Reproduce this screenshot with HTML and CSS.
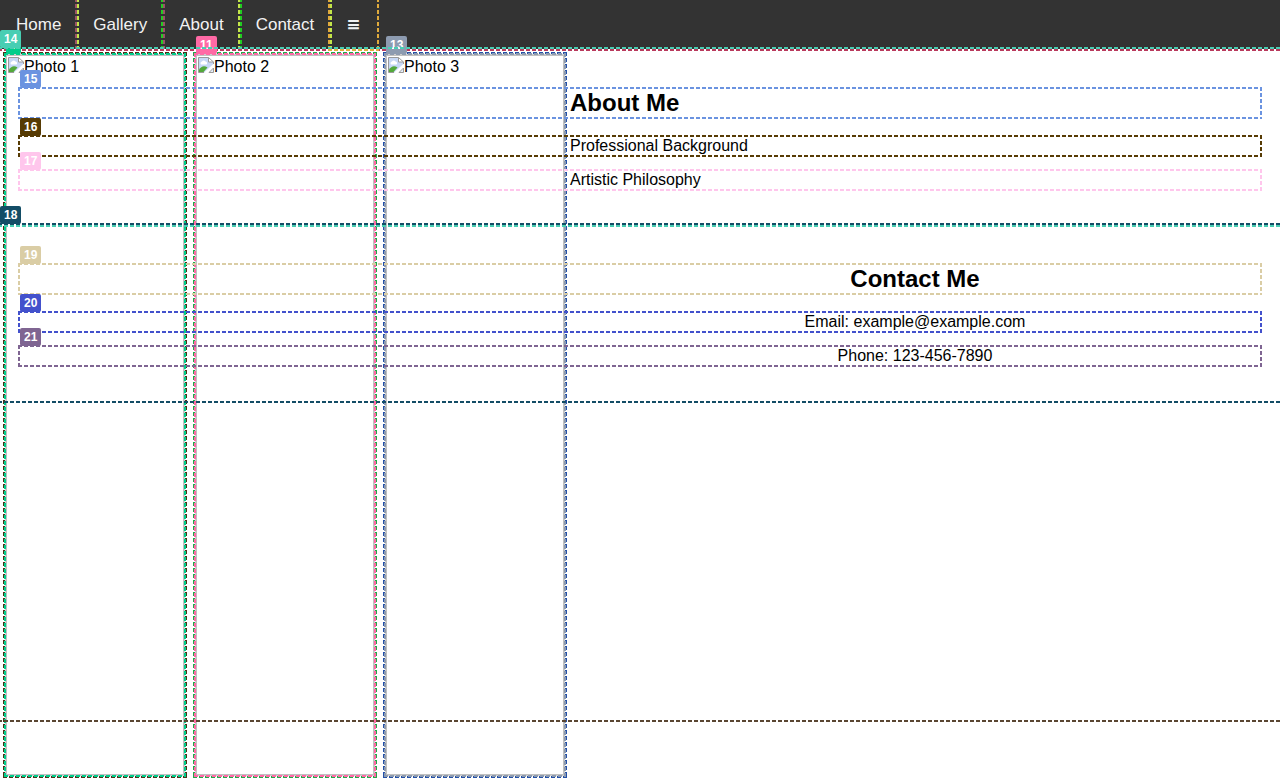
FILE: index.html
```html
<!DOCTYPE html>
<html lang="en">
<head>
<meta charset="utf-8">
<title>Photo Portfolio</title>
<link rel="stylesheet" href="styles.css">
</head>
<body>
<svg class="sprite" aria-hidden="true">
  <symbol id="broken" viewBox="0 0 16 16">
    <path d="M.5 .5h10l5 5V7L7 15.500H.5z" fill="#c6d7f5"/>
    <path d="M3 7.500a2 2 0 0 1 1-3 2 2 0 0 1 3.500 0 1.700 1.700 0 0 1 1 3z" fill="#fff"/>
    <path d="M1 15v-2.500c2-3 5-4.500 8.500-2L5.500 15z" fill="#52a83a"/>
    <path d="M10.500 .5v4.500H15" fill="#fff"/>
    <path d="M6 15.500H.5V.5h10L15.500 5v2M10.500 .5V5h5" fill="none" stroke="#9a9a9a"/>
    <path d="M6 15.500L15.500 7v2.500L9 15.500z" fill="#fff"/>
    <path d="M15.500 11v4.500H11z" fill="#e4edfb" stroke="#9a9a9a"/>
  </symbol>
</svg>
<div class="page">
  <div class="screen outlined mark-umber">
    <nav class="nav outlined mark-red">
      <ul class="nav-list">
        <li><a class="nav-link outlined mark-lime" href="#home">Home</a></li>
        <li><a class="nav-link outlined mark-mauve" href="#gallery">Gallery</a></li>
        <li><a class="nav-link outlined mark-green" href="#about">About</a></li>
        <li><a class="nav-link outlined mark-lime" href="#contact">Contact</a></li>
      </ul>
      <a class="nav-link nav-toggle outlined mark-amber" href="#menu">≡</a>
    </nav>
    <div class="gallery" id="gallery">
      <div class="photo outlined mark-bark">
        <div class="picture outlined mark-mint"><span class="tag">9</span><svg class="broken" aria-hidden="true"><use href="#broken"/></svg>Photo 1</div>
      </div>
      <div class="photo outlined mark-leaf">
        <div class="picture outlined mark-pink"><span class="tag">11</span><svg class="broken" aria-hidden="true"><use href="#broken"/></svg>Photo 2</div>
      </div>
      <div class="photo outlined mark-blue">
        <div class="picture outlined mark-slate"><span class="tag">13</span><svg class="broken" aria-hidden="true"><use href="#broken"/></svg>Photo 3</div>
      </div>
    </div>
    <section class="section outlined mark-teal" id="about">
      <span class="tag">14</span>
      <h2 class="outlined mark-sky"><span class="tag">15</span>About Me</h2>
      <p class="outlined mark-brown"><span class="tag">16</span>Professional Background</p>
      <p class="outlined mark-blush"><span class="tag">17</span>Artistic Philosophy</p>
    </section>
    <section class="section contact outlined mark-navy" id="contact">
      <span class="tag">18</span>
      <h2 class="outlined mark-sand"><span class="tag">19</span>Contact Me</h2>
      <p class="outlined mark-indigo"><span class="tag">20</span>Email: example@example.com</p>
      <p class="outlined mark-plum"><span class="tag">21</span>Phone: 123-456-7890</p>
    </section>
  </div>
</div>
</body>
</html>
```

FILE: styles.css
```css
:root {
  --screen: 720px;
}

* {
  box-sizing: border-box;
}

body {
  margin: 0;
  font: 16px/18px "Liberation Sans", Arial, sans-serif;
  color: #000;
  background: #fff;
}

.sprite {
  display: none;
}

.page {
  min-height: 100vh;
  overflow-x: clip;
}

.screen {
  height: var(--screen);
}

/* Dashed frame drawn just outside a box */
.outlined {
  position: relative;
}

.outlined::after {
  content: "";
  position: absolute;
  inset: -2px;
  pointer-events: none;
  --across: linear-gradient(90deg, var(--mark) 4px, transparent 4px);
  --down: linear-gradient(var(--mark) 4px, transparent 4px);
  background:
    var(--across) 0 0 / 6px 2px repeat-x,
    var(--across) 0 100% / 6px 2px repeat-x,
    var(--down) 0 0 / 2px 6px repeat-y,
    var(--down) 100% 0 / 2px 6px repeat-y;
}

/* Navigation */
.nav {
  display: flex;
  z-index: 0;
  background: #333;
}

.nav-list {
  display: flex;
  margin: 0 -2px 0 0;
  padding: 0 2px 0 0;
  list-style: none;
  overflow: hidden;
}

.nav-link {
  display: block;
  padding: 14px 16px;
  font-size: 17px;
  line-height: 21px;
  color: #f2f2f2;
  text-decoration: none;
}

.nav-toggle {
  font-family: "DejaVu Sans", sans-serif;
  font-weight: bold;
  z-index: 1;
}

/* Gallery */
.photo {
  float: left;
  z-index: 0;
  width: 180px;
  margin: 5px;
  border: 1px solid #ccc;
}

.picture {
  z-index: 1;
  height: var(--screen);
  padding: 1px;
  border: 1px solid silver;
  line-height: 20px;
}

.photo.outlined::after,
.picture.outlined::after {
  inset: -3px;
}

.broken {
  width: 16px;
  height: 16px;
  vertical-align: top;
}

/* Text sections */
.section {
  padding: 20px;
}

.section::before {
  content: "";
  display: table;
}

.section h2 {
  margin: 20px 0;
  font-size: 24px;
  line-height: 28px;
}

.section p {
  margin: 16px 0;
}

.contact {
  text-align: center;
}

/* Numbered labels above each outlined box */
.tag {
  position: absolute;
  top: -19px;
  left: 0;
  padding: 0 4px;
  border-radius: 2px;
  font-size: 12px;
  font-weight: bold;
  line-height: 18px;
  color: #fff;
  background: var(--mark);
}

.picture .tag {
  top: -20px;
  left: -1px;
}

.mark-umber { --mark: #5a4632; }
.mark-red { --mark: #b93a5c; }
.mark-lime { --mark: #c3e64a; }
.mark-mauve { --mark: #9b5268; }
.mark-green { --mark: #22cc22; }
.mark-amber { --mark: #e0ab3c; }
.mark-bark { --mark: #4b3418; }
.mark-mint { --mark: #00cd8b; }
.mark-leaf { --mark: #22a84a; }
.mark-pink { --mark: #ff69a5; }
.mark-blue { --mark: #2451a8; }
.mark-slate { --mark: #8d9bb0; }
.mark-teal { --mark: #48ceb3; }
.mark-sky { --mark: #6b93e0; }
.mark-brown { --mark: #573b04; }
.mark-blush { --mark: #ffc6ec; }
.mark-navy { --mark: #134d66; }
.mark-sand { --mark: #dacda5; }
.mark-indigo { --mark: #4351cc; }
.mark-plum { --mark: #7f6592; }
```
